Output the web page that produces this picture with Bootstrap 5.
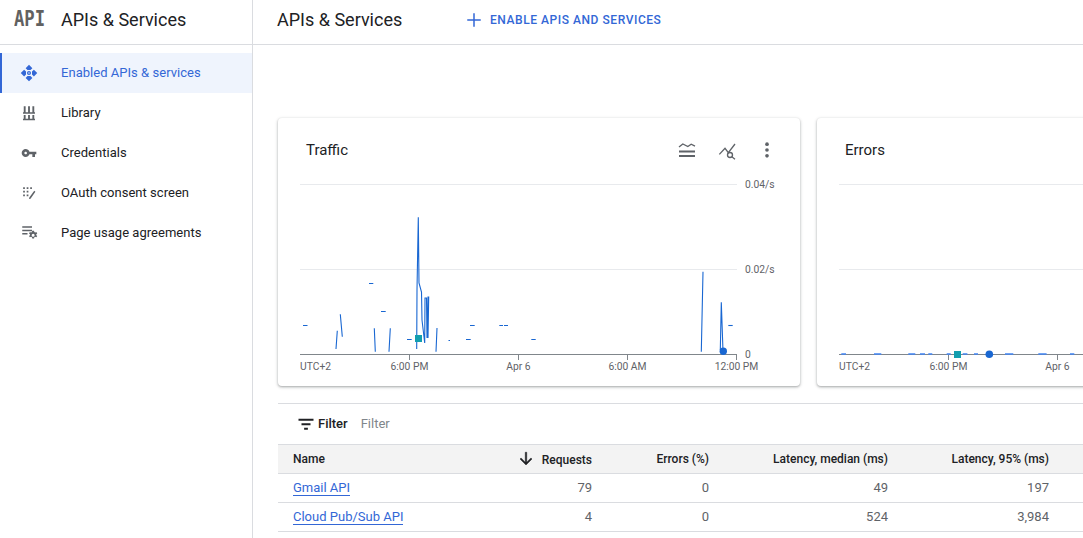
<!DOCTYPE html>
<html lang="en">
<head>
  <meta charset="UTF-8" />
  <meta name="viewport" content="width=device-width, initial-scale=1.0" />
  <title>APIs &amp; Services</title>
  <link href="https://cdn.jsdelivr.net/npm/bootstrap@5.3.3/dist/css/bootstrap.min.css" rel="stylesheet" />
  <style>
    html, body { height: 100%; overflow: hidden; }
    body { font-family: Roboto, "Liberation Sans", sans-serif; color: #202124; background: #fff; }

    .side-bar { width: 253px; flex: none; border-right: 1px solid #dadce0; height: 538px; }
    .side-head { height: 45px; border-bottom: 1px solid #dadce0; padding: 0 0 5px 14px; }
    .api-logo { width: 47px; font-family: "DejaVu Sans Mono", monospace; font-weight: 700; font-size: 21px; color: #616161; display: inline-block; transform: scaleX(.82); transform-origin: left center; }
    .side-title { font-size: 18px; }
    .side-list { padding-top: 8px; }
    .side-item { height: 40px; padding-left: 20px; font-size: 13px; letter-spacing: .03px; color: #202124; text-decoration: none; }
    .side-item svg { width: 18px; height: 18px; margin-right: 23px; fill: #5f6368; flex: none; }
    .side-item.is-active { background: #eff4fd; color: #3367d6; border-left: 2px solid #3367d6; padding-left: 18px; }
    .side-item.is-active svg { fill: #3367d6; }

    .main-pane { flex: 1; min-width: 0; }
    .top-bar { height: 45px; border-bottom: 1px solid #dadce0; padding: 0 0 5px 24px; }
    .top-title { font-size: 18px; width: 188px; }
    .add-btn { color: #3367d6; font-size: 12px; font-weight: 500; letter-spacing: .55px; text-decoration: none; }
    .add-btn svg { width: 18px; height: 18px; margin-right: 7px; fill: #3367d6; }

    .chart-row { padding: 73px 0 0 25px; gap: 17px; }
    .chart-box { width: 522px; height: 268px; flex: none; border: 0; border-radius: 4px; box-shadow: 0 1px 2px rgba(60,64,67,.3), 0 1px 3px 1px rgba(60,64,67,.15); }
    .chart-head { height: 64px; padding: 0 23px 0 28px; }
    .chart-title { font-size: 15px; }
    .chart-tools { gap: 20px; }
    .chart-tools svg { width: 20px; height: 20px; fill: #5f6368; display: block; }
    .tool-stroke { fill: none; stroke: #5f6368; stroke-width: 1.6; }
    .chart-plot { display: block; overflow: visible; }
    .chart-plot text { font-family: Roboto, "Liberation Sans", sans-serif; font-size: 10.3px; fill: #5f6368; }
    .grid-line { stroke: #e8eaed; stroke-width: 1; }
    .axis-line { stroke: #80868b; stroke-width: 1; }
    .trace { stroke: #1967d2; stroke-width: 1.1; fill: none; }
    .trace-soft { stroke: #4285f4; stroke-width: 1.6; fill: none; }
    .mark-dot { fill: #1967d2; }
    .mark-sq { fill: #129eaf; }

    .table-wrap { margin: 17px 0 0 25px; border-top: 1px solid #dadce0; }
    .filter-bar { height: 40px; padding-left: 19px; font-size: 13px; }
    .filter-bar svg { width: 18px; height: 18px; margin-right: 3px; fill: #202124; }
    .filter-name { font-weight: 500; margin-right: 13px; }
    .filter-hint { color: #80868b; }
    .api-table { table-layout: fixed; width: 805px; font-size: 13px; margin: 0; }
    .api-table th, .api-table td { height: 29px; padding: 0 16px; text-align: right; vertical-align: middle; border-bottom: 1px solid #dadce0; color: #5f6368; box-shadow: none; }
    .api-table th { background: #f3f3f3; font-size: 12px; font-weight: 500; color: #202124; border-top: 1px solid #dadce0; }
    .api-table th:first-child, .api-table td:first-child { text-align: left; padding-left: 15px; padding-right: 0; }
    .api-table th:last-child, .api-table td:last-child { padding-right: 34px; }
    .col-name { width: 198px; }
    .col-req { width: 132px; }
    .col-err { width: 117px; }
    .col-med { width: 179px; }
    .api-link { color: #3367d6; text-decoration: none; border-bottom: 1px solid #3367d6; }
    .sort-arrow { width: 18px; height: 18px; fill: #202124; stroke: #202124; stroke-width: .6; margin-right: 4px; vertical-align: -4px; }
  </style>
</head>

<body class="d-flex">
  <aside class="side-bar">
    <div class="side-head d-flex align-items-center">
      <span class="api-logo">API</span>
      <span class="side-title">APIs &amp; Services</span>
    </div>
    <nav class="side-list d-flex flex-column">
      <a href="#" class="side-item is-active d-flex align-items-center">
        <svg viewBox="0 0 24 24"><path d="M12 1l4.500 4.500L14 8h-4L7.500 5.500zM10 16h4l2.500 2.500L12 23l-4.500-4.500zM5.500 7.500L8 10v4l-2.500 2.500L1 12zM18.500 7.500L23 12l-4.500 4.500L16 14v-4z"/><path fill-rule="evenodd" d="M12 9.300a2.700 2.700 0 1 1 0 5.400 2.700 2.700 0 0 1 0-5.400zm0 1.700a1 1 0 1 0 0 2 1 1 0 0 0 0-2z"/></svg>
        Enabled APIs &amp; services
      </a>
      <a href="#" class="side-item d-flex align-items-center">
        <svg viewBox="0 0 24 24"><path d="M5 3h2.500v8H5zM10.750 3h2.500v8h-2.500zM16.500 3h2.500v8h-2.500zM4 11h16v2H4zM5 14.500h2.500v5H5zM10.750 14.500h2.500v5h-2.500zM16.500 14.500h2.500v5h-2.500zM4 19.500h16v2H4z"/></svg>
        Library
      </a>
      <a href="#" class="side-item d-flex align-items-center">
        <svg viewBox="-1.500 -1.500 27 27"><path d="M12.650 10C11.830 7.670 9.610 6 7 6c-3.310 0-6 2.690-6 6s2.690 6 6 6c2.610 0 4.830-1.670 5.650-4H17v4h4v-4h2v-4H12.650zM7 14c-1.100 0-2-.9-2-2s.9-2 2-2 2 .9 2 2-.9 2-2 2z"/></svg>
        Credentials
      </a>
      <a href="#" class="side-item d-flex align-items-center">
        <svg viewBox="0 0 24 24"><path d="M4.200 4.200h2.300v2.300H4.200zM8.900 4.200h2.300v2.300H8.900zM13.600 4.200h2.300v2.300h-2.300zM4.200 8.900h2.300v2.300H4.200zM8.900 8.900h2.300v2.300H8.900zM4.200 14.100h2.300v2.300H4.200zM8.900 14.100h2.300v2.300H8.900zM19 9l1.500 1.300-6.500 9.200-2 .5.400-2z"/></svg>
        OAuth consent screen
      </a>
      <a href="#" class="side-item d-flex align-items-center">
        <svg viewBox="0 0 24 24"><path d="M3 3h13v2H3zM3 7.500h13v2H3zM3 12h7v2H3z"/><path transform="translate(.5 -2)" fill-rule="evenodd" d="M17 11l1.200.1.400 1.600 1.200.6 1.500-.7 1.200 1.900-1.300 1v1.400l1.300 1-1.200 1.900-1.500-.7-1.200.6-.4 1.600h-2.400l-.4-1.600-1.200-.6-1.500.7-1.200-1.900 1.300-1v-1.400l-1.300-1 1.200-1.900 1.500.7 1.200-.6.400-1.600zm0 4a2 2 0 1 0 0 4 2 2 0 0 0 0-4z"/></svg>
        Page usage agreements
      </a>
    </nav>
  </aside>

  <main class="main-pane">
    <header class="top-bar d-flex align-items-center">
      <span class="top-title">APIs &amp; Services</span>
      <a href="#" class="add-btn d-flex align-items-center">
        <svg viewBox="0 0 24 24"><path d="M21 13h-8v8h-2v-8H3v-2h8V3h2v8h8z"/></svg>
        ENABLE APIS AND SERVICES
      </a>
    </header>

    <section class="chart-row d-flex">
      <div class="card chart-box">
        <div class="chart-head d-flex align-items-center justify-content-between">
          <span class="chart-title">Traffic</span>
          <div class="chart-tools d-flex align-items-center">
            <svg viewBox="0 0 24 24"><path d="M2.400 12.600h19.200v2.400H2.400zM2.400 18h19.200v2.400H2.400z"/><path class="tool-stroke" d="M2.400 8.500l4.600-3.700 6 3 4-2.800 4.600 2.300"/></svg>
            <svg viewBox="0 0 24 24"><path class="tool-stroke" d="M2.800 17.200L9.600 10l4 5.200 8-10.400"/><circle class="tool-stroke" cx="15.600" cy="18" r="3"/><path class="tool-stroke" d="M17.800 20.200l3.800 2.800"/></svg>
            <svg viewBox="0 0 24 24"><circle cx="12" cy="5" r="2.200"/><circle cx="12" cy="12" r="2.200"/><circle cx="12" cy="19" r="2.200"/></svg>
          </div>
        </div>
        <!-- viewBox uses page coords so the points read straight off the picture -->
        <svg class="chart-plot" width="522" height="204" viewBox="278 182 522 204">
          <line class="grid-line" x1="300" y1="184.500" x2="737" y2="184.500"/>
          <line class="grid-line" x1="300" y1="269.500" x2="737" y2="269.500"/>
          <line class="axis-line" x1="300" y1="354.500" x2="737" y2="354.500"/>
          <line class="axis-line" x1="409.500" y1="354" x2="409.500" y2="360"/>
          <line class="axis-line" x1="518.500" y1="354" x2="518.500" y2="360"/>
          <line class="axis-line" x1="627.500" y1="354" x2="627.500" y2="360"/>
          <line class="axis-line" x1="736.500" y1="354" x2="736.500" y2="360"/>
          <text x="745" y="188">0.04/s</text>
          <text x="745" y="273">0.02/s</text>
          <text x="745" y="358">0</text>
          <text x="300" y="370">UTC+2</text>
          <text x="409.500" y="370" text-anchor="middle">6:00 PM</text>
          <text x="518.500" y="370" text-anchor="middle">Apr 6</text>
          <text x="627.500" y="370" text-anchor="middle">6:00 AM</text>
          <text x="736.500" y="370" text-anchor="middle">12:00 PM</text>
          <path class="trace" d="M303 325.500h4.500M336 349l1.300-18.300M340.300 314.300l2 22.400M369 283.500h4.300M374.300 328.300l1 23.400M381 311.500h4.700M390.300 328.300l-1.300 23.400M407 339.500h4.700M437 328l-1 23.700M448.500 340.500h1.500M466 339.500h4.700M470 325.500h4.700M499.300 325.500h3.700M504 325.500h4M531.300 339.500h4.400M703 271.700l-1.700 80M721.300 302.300l-1 47.700M721.300 302.300l1.700 49"/>
          <path class="trace" d="M416.700 349l.3-59 1.300-72.700.7 65.700 2.500 9 .5 28 2.700 23 .3-45 1.500 0 .5 40 1-41 .7 0-.7 41"/>
          <path class="trace" d="M728.300 325.500h4.400"/>
          <rect class="mark-sq" x="415" y="335" width="7" height="7"/>
          <circle class="mark-dot" cx="723.300" cy="351.300" r="3.700"/>
        </svg>
      </div>

      <div class="card chart-box">
        <div class="chart-head d-flex align-items-center">
          <span class="chart-title">Errors</span>
        </div>
        <svg class="chart-plot" width="522" height="204" viewBox="817 182 522 204">
          <line class="grid-line" x1="839" y1="184.500" x2="1280" y2="184.500"/>
          <line class="grid-line" x1="839" y1="269.500" x2="1280" y2="269.500"/>
          <line class="axis-line" x1="839" y1="354.500" x2="1280" y2="354.500"/>
          <line class="axis-line" x1="948.500" y1="354" x2="948.500" y2="360"/>
          <line class="axis-line" x1="1057.500" y1="354" x2="1057.500" y2="360"/>
          <text x="839" y="370">UTC+2</text>
          <text x="948.500" y="370" text-anchor="middle">6:00 PM</text>
          <text x="1057.500" y="370" text-anchor="middle">Apr 6</text>
          <path class="trace-soft" d="M841.300 354h4.700M874 354h7.300M908.300 354h7M920 354h5M928.300 354h4M946.700 354h4M962.700 354h4.700M974 354h4M1005 354h8.300M1038.300 354h8.300M1070 354h4.300"/>
          <rect class="mark-sq" x="954" y="351" width="7" height="7"/>
          <circle class="mark-dot" cx="989.300" cy="354.300" r="3.800"/>
        </svg>
      </div>
    </section>

    <section class="table-wrap">
      <div class="filter-bar d-flex align-items-center">
        <svg viewBox="0 0 24 24"><path d="M2 5h20v2.500H2zM6 11h12v2.500H6zM9.500 17h5v2.500h-5z"/></svg>
        <span class="filter-name">Filter</span>
        <span class="filter-hint">Filter</span>
      </div>
      <table class="table api-table">
        <thead>
          <tr>
            <th class="col-name">Name</th>
            <th class="col-req"><svg class="sort-arrow" viewBox="0 0 24 24"><path d="M20 12l-1.400-1.400-5.600 5.600V3h-2v13.200l-5.600-5.600L4 12l8 8z"/></svg> Requests</th>
            <th class="col-err">Errors (%)</th>
            <th class="col-med">Latency, median (ms)</th>
            <th>Latency, 95% (ms)</th>
          </tr>
        </thead>
        <tbody>
          <tr><td><a href="#" class="api-link">Gmail API</a></td><td>79</td><td>0</td><td>49</td><td>197</td></tr>
          <tr><td><a href="#" class="api-link">Cloud Pub/Sub API</a></td><td>4</td><td>0</td><td>524</td><td>3,984</td></tr>
        </tbody>
      </table>
    </section>
  </main>

  <script src="https://cdn.jsdelivr.net/npm/bootstrap@5.3.3/dist/js/bootstrap.bundle.min.js"></script>
</body>
</html>
